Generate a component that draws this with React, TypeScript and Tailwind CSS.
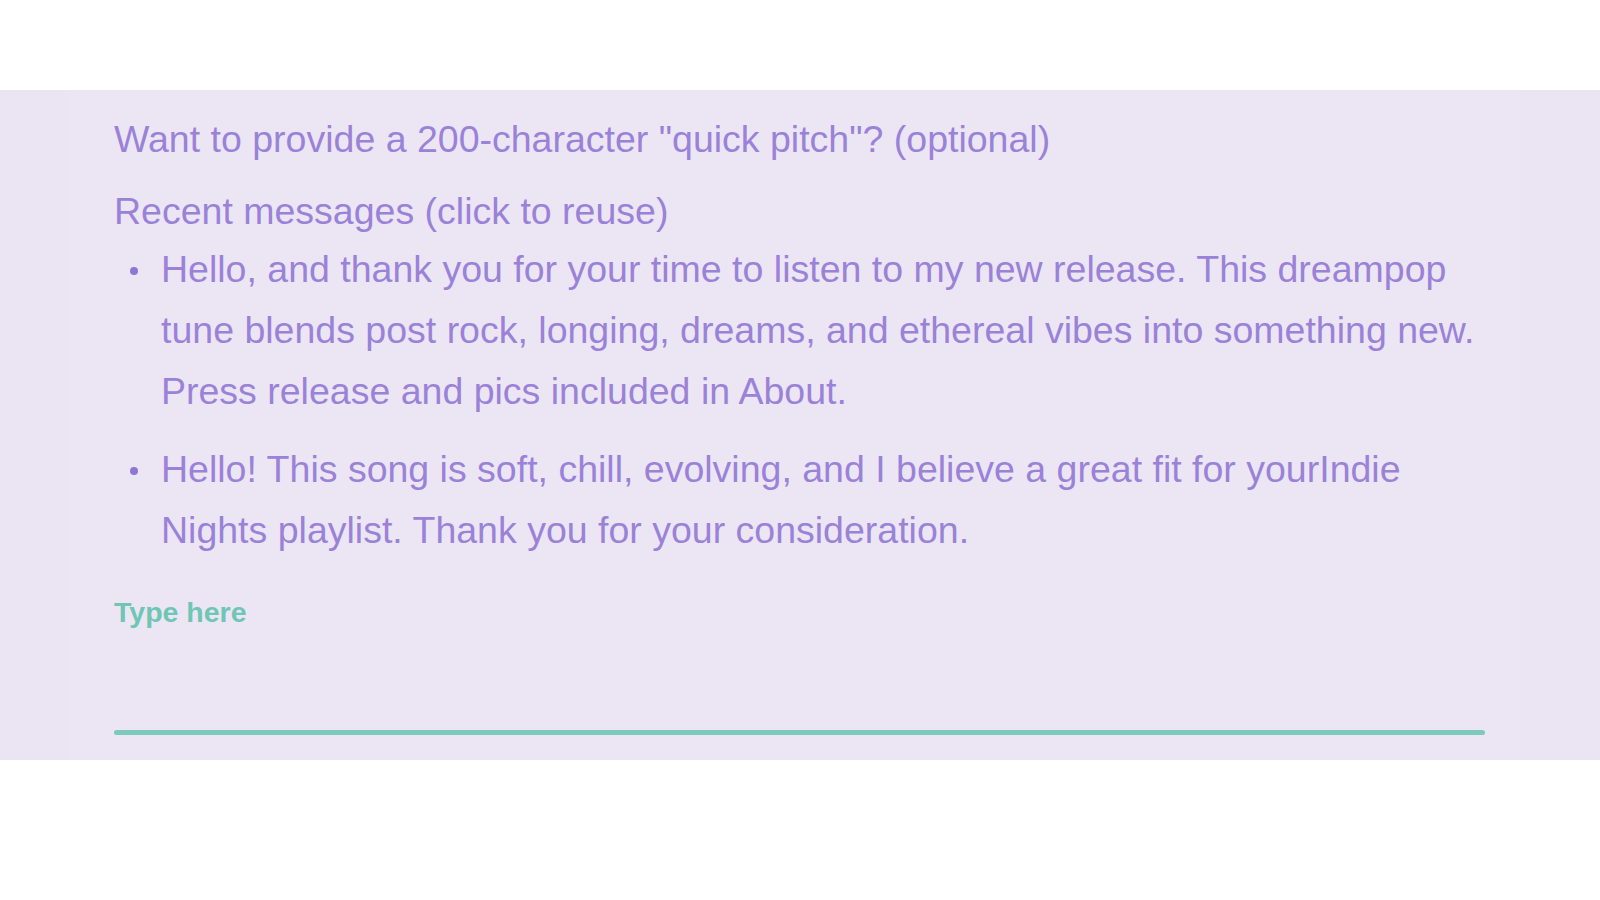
const messages = [
  "Hello, and thank you for your time to listen to my new release. This dreampop tune blends post rock, longing, dreams, and ethereal vibes into something new. Press release and pics included in About.",
  "Hello! This song is soft, chill, evolving, and I believe a great fit for yourIndie Nights playlist. Thank you for your consideration.",
];

export default function App() {
  return (
    <div className="min-h-[900px] w-full bg-white pt-[90px] font-['Liberation_Sans',Arial,sans-serif]">
      <section className="flex h-[670px] w-full bg-[#ebe4f2]">
        <div className="ml-[70px] flex w-[1450px] flex-col bg-[#ece6f4] pl-[44px] pr-[35px] pt-[24px]">
          <p className="text-[37.5px] leading-[50px] text-[#9a82d8]">
            Want to provide a 200-character "quick pitch"? (optional)
          </p>
          <p className="mt-[22px] text-[37.5px] leading-[50px] text-[#9a82d8]">
            Recent messages (click to reuse)
          </p>
          <ul className="mt-[3px] flex flex-col gap-[17px]">
            {messages.map((m) => (
              <li key={m} className="flex cursor-pointer items-start">
                <span className="ml-[16px] mt-[28px] h-[8px] w-[8px] shrink-0 rounded-full bg-[#8f76d4]" />
                <span className="ml-[23px] text-[37.5px] leading-[61px] text-[#9a82d8]">
                  {m}
                </span>
              </li>
            ))}
          </ul>
          <div className="mt-[33px] flex flex-col">
            <span className="text-[28.5px] font-bold leading-[36px] text-[#6fc6b5]">
              Type here
            </span>
            <div className="mt-[100px] h-[5px] w-[1371px] rounded-full bg-[#7ccabb]" />
          </div>
        </div>
      </section>
    </div>
  );
}
